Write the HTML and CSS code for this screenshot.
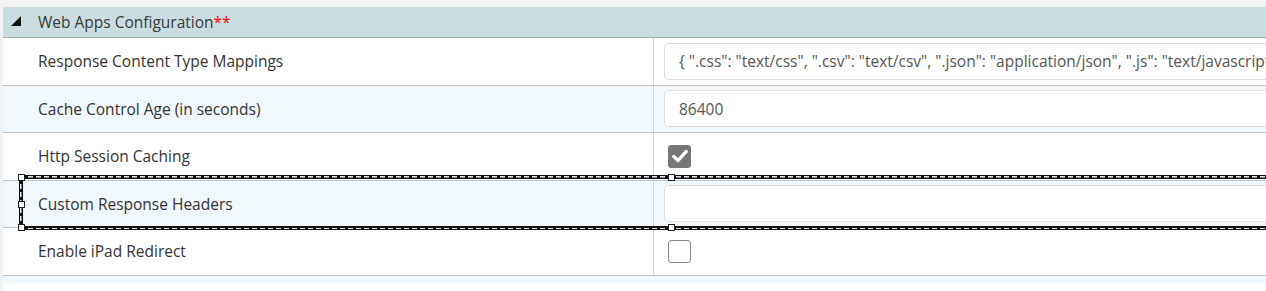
FILE: index.html
```html
<!DOCTYPE html>
<html lang="en">
<head>
    <meta charset="UTF-8">
    <meta name="viewport" content="width=device-width, initial-scale=1.0">
    <title>Web Apps Configuration</title>
    <link rel="stylesheet" href="styles.css">
</head>
<body>
    <div class="panel">
        <div class="panel-header">
            <span class="toggle"></span>
            <span class="panel-title">Web Apps Configuration<span class="required">**</span></span>
        </div>

        <div class="row">
            <div class="label">Response Content Type Mappings</div>
            <div class="value">
                <input type="text" class="text-input" value='{ ".css": "text/css", ".csv": "text/csv", ".json": "application/json", ".js": "text/javascript", ".html": "text/html" }'>
            </div>
        </div>

        <div class="row alt">
            <div class="label">Cache Control Age (in seconds)</div>
            <div class="value">
                <input type="text" class="text-input" value="86400">
            </div>
        </div>

        <div class="row">
            <div class="label">Http Session Caching</div>
            <div class="value">
                <span class="checkbox checked">
                    <svg viewBox="0 0 24 24" width="20" height="20"><path d="M4.5 12.5l5 5 10-11" fill="none" stroke="#fff" stroke-width="4" stroke-linecap="round" stroke-linejoin="round"/></svg>
                </span>
            </div>
        </div>

        <div class="row alt selected">
            <div class="label">Custom Response Headers</div>
            <div class="value">
                <input type="text" class="text-input" value="">
            </div>
            <div class="selection">
                <span class="handle h-tl"></span>
                <span class="handle h-ml"></span>
                <span class="handle h-bl"></span>
                <span class="handle h-tc"></span>
                <span class="handle h-bc"></span>
            </div>
        </div>

        <div class="row">
            <div class="label">Enable iPad Redirect</div>
            <div class="value">
                <span class="checkbox"></span>
            </div>
        </div>

        <div class="row alt stub"></div>
    </div>
</body>
</html>
```

FILE: styles.css
```css
* {
    margin: 0;
    padding: 0;
    box-sizing: border-box;
}

body {
    background: #f2f2f2;
    font-family: 'Open Sans', 'Noto Sans', sans-serif;
    font-size: 15.5px;
    color: #333;
    overflow: hidden;
    height: 291px;
}

.panel {
    margin: 7px 0 0 3px;
    width: 1400px;
    min-height: 290px;
    background: #fff;
}

.panel-header {
    height: 31px;
    display: flex;
    align-items: center;
    background: #c9dde0;
    border-bottom: 1px solid #a9b0ab;
}

.toggle {
    width: 0;
    height: 0;
    margin: 0 17px 2px 8px;
    border-left: 10px solid transparent;
    border-bottom: 10px solid #111;
}

.panel-title {
    color: #3a3a3a;
}

.required {
    color: #f00;
}

.row {
    position: relative;
    display: grid;
    grid-template-columns: 651px 1fr;
    height: 47.5px;
    border-bottom: 1px solid #c4c4c4;
    background: #fff;
}

.row.alt {
    background: #f0f7fd;
}

.row.stub {
    height: 7px;
    border-bottom: none;
}

.label {
    display: flex;
    align-items: center;
    padding-left: 35px;
    border-right: 1px solid #d4d4d4;
}

.value {
    display: flex;
    align-items: center;
    padding-left: 10px;
}

.text-input {
    width: 100%;
    height: 37px;
    padding: 0 14px;
    border: 1px solid #dcdcdc;
    border-radius: 5px;
    background: #fff;
    font-family: inherit;
    font-size: 15.5px;
    color: #555;
}

.checkbox {
    display: flex;
    align-items: center;
    justify-content: center;
    width: 23px;
    height: 23px;
    margin-left: 4px;
    border: 1.5px solid #8c8c8c;
    border-radius: 3px;
    background: #fff;
}

.checkbox.checked {
    background: #767676;
    border-color: #767676;
}

/* designer selection frame */
.selection {
    position: absolute;
    z-index: 2;
    left: 16px;
    right: -10px;
    top: -6px;
    bottom: -3px;
    border: 4px solid #111;
}

.selection::before {
    content: '';
    position: absolute;
    top: -3px;
    bottom: -3px;
    left: -3px;
    right: -3px;
    background:
        repeating-linear-gradient(90deg, #e8e8e8 0 5px, transparent 5px 8px) left top / 100% 1.5px no-repeat,
        repeating-linear-gradient(90deg, #e8e8e8 0 5px, transparent 5px 8px) left bottom / 100% 1.5px no-repeat,
        repeating-linear-gradient(180deg, #e8e8e8 0 5px, transparent 5px 8px) left top / 1.5px 100% no-repeat;
}

.handle {
    position: absolute;
    width: 7px;
    height: 7px;
    background: #fff;
    border: 1px solid #222;
    z-index: 1;
}

.h-tl { left: -5px; top: -5px; }
.h-ml { left: -5px; top: 22px; }
.h-bl { left: -5px; bottom: -5px; }
.h-tc { left: 645px; top: -5px; }
.h-bc { left: 645px; bottom: -5px; }
```
